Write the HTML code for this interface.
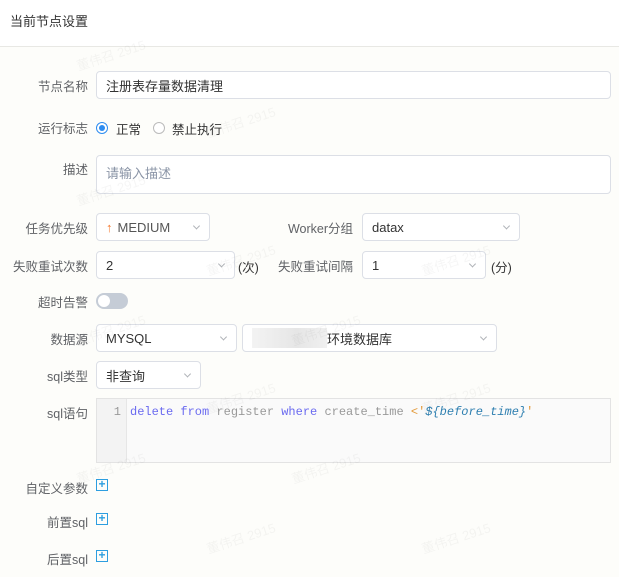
<!DOCTYPE html>
<html><head><meta charset="utf-8"><style>
*{box-sizing:border-box;margin:0;padding:0}
body{width:619px;height:577px;overflow:hidden;background:#fdfdfa;font-family:"Liberation Sans","Noto Sans CJK SC",sans-serif;font-size:13px;color:#333;position:relative}
.hd{position:absolute;left:0;top:0;width:619px;height:47px;background:#fff;border-bottom:1px solid #e8e8e4}
.t{position:absolute;left:10px;top:11px;font-size:13px;color:#333}
.lb{position:absolute;color:#606266;font-size:12.5px;text-align:right;white-space:nowrap}
.box{position:absolute;background:#fff;border:1px solid #dcdfe6;border-radius:4px;font-size:13px;color:#333;padding-left:9px;display:flex;align-items:center}
.ar{position:absolute;right:10px;top:50%;width:5px;height:5px;border-right:1px solid #b0b3b8;border-bottom:1px solid #b0b3b8;transform:translateY(-70%) rotate(45deg)}
.plus{position:absolute;left:96px;width:12px;height:12px;border:1px solid #2d9ee0;color:#2d9ee0;font-size:12px;line-height:9px;text-align:center;font-weight:bold}
.wm{position:absolute;color:rgba(0,0,0,.04);font-size:13px;transform:rotate(-18deg)}
</style></head><body>
<div class="hd"><div class="t">当前节点设置</div></div>

<div class="lb" style="left:20px;width:68px;top:76px">节点名称</div>
<div class="box" style="left:96px;top:71px;width:515px;height:28px">注册表存量数据清理</div>

<div class="lb" style="left:20px;width:68px;top:118px">运行标志</div>
<div style="position:absolute;left:96px;top:122px;width:12px;height:12px;border-radius:50%;border:1px solid #2d8cf0;background:#fff"><div style="position:absolute;left:2px;top:2px;width:6px;height:6px;border-radius:50%;background:#2d8cf0"></div></div>
<div style="position:absolute;left:116px;top:119px;font-size:12.5px">正常</div>
<div style="position:absolute;left:153px;top:122px;width:12px;height:12px;border-radius:50%;border:1px solid #bbb;background:#fff"></div>
<div style="position:absolute;left:172px;top:119px;font-size:12.5px">禁止执行</div>

<div class="lb" style="left:20px;width:68px;top:159px">描述</div>
<div class="box" style="left:96px;top:155px;width:515px;height:39px;align-items:flex-start;padding-top:7px;color:#8a94a6">请输入描述</div>

<div class="lb" style="left:10px;width:78px;top:218px">任务优先级</div>
<div class="box" style="left:96px;top:213px;width:114px;height:28px;color:#555"><span style="color:#f5782d;margin-right:5px">↑</span>MEDIUM<i class="ar"></i></div>
<div class="lb" style="left:270px;width:83px;top:218px">Worker分组</div>
<div class="box" style="left:362px;top:213px;width:158px;height:28px">datax<i class="ar"></i></div>

<div class="lb" style="left:4px;width:84px;top:256px">失败重试次数</div>
<div class="box" style="left:96px;top:251px;width:139px;height:28px">2<i class="ar"></i></div>
<div class="lb" style="left:238px;top:257px;color:#333">(次)</div>
<div class="lb" style="left:270px;width:83px;top:256px">失败重试间隔</div>
<div class="box" style="left:362px;top:251px;width:124px;height:28px">1<i class="ar"></i></div>
<div class="lb" style="left:491px;top:257px;color:#333">(分)</div>

<div class="lb" style="left:20px;width:68px;top:292px">超时告警</div>
<div style="position:absolute;left:96px;top:293px;width:32px;height:16px;border-radius:8px;background:#c5ccd6"><div style="position:absolute;left:2px;top:2px;width:12px;height:12px;border-radius:50%;background:#fff"></div></div>

<div class="lb" style="left:20px;width:68px;top:329px">数据源</div>
<div class="box" style="left:96px;top:324px;width:141px;height:28px">MYSQL<i class="ar"></i></div>
<div class="box" style="left:242px;top:324px;width:255px;height:28px"><span style="display:inline-block;width:75px;height:20px;background:linear-gradient(90deg,#f3f3f3,#e6e6e6 60%,#f0f0f0)"></span>环境数据库<i class="ar"></i></div>

<div class="lb" style="left:20px;width:68px;top:366px">sql类型</div>
<div class="box" style="left:96px;top:361px;width:105px;height:28px">非查询<i class="ar"></i></div>

<div class="lb" style="left:20px;width:68px;top:403px">sql语句</div>
<div style="position:absolute;left:96px;top:398px;width:515px;height:65px;border:1px solid #e3e3e3;background:#fafafa">
<div style="position:absolute;left:0;top:0;width:30px;height:63px;background:#f3f3f3;border-right:1px solid #e6e6e6;font-family:'Liberation Mono',monospace;font-size:12px;color:#999;text-align:right;padding:6px 5px 0 0">1</div>
<div style="position:absolute;left:33px;top:6px;font-family:'Liberation Mono',monospace;font-size:12px;white-space:pre;color:#999"><span style="color:#6a6af0">delete from</span> register <span style="color:#6a6af0">where</span> create_time <span style="color:#e39a3a">&lt;</span><span style="color:#e39a3a">'</span><i style="color:#2e7fb0">${before_time}</i><span style="color:#e39a3a">'</span></div>
</div>

<div class="lb" style="left:10px;width:78px;top:478px">自定义参数</div>
<div class="plus" style="top:479px">+</div>
<div class="lb" style="left:20px;width:68px;top:512px">前置sql</div>
<div class="plus" style="top:513px">+</div>
<div class="lb" style="left:20px;width:68px;top:549px">后置sql</div>
<div class="plus" style="top:550px">+</div>

<div class="wm" style="left:75px;top:45px">董伟召 2915</div>
<div class="wm" style="left:205px;top:112px">董伟召 2915</div>
<div class="wm" style="left:75px;top:180px">董伟召 2915</div>
<div class="wm" style="left:205px;top:250px">董伟召 2915</div>
<div class="wm" style="left:420px;top:250px">董伟召 2915</div>
<div class="wm" style="left:75px;top:320px">董伟召 2915</div>
<div class="wm" style="left:290px;top:320px">董伟召 2915</div>
<div class="wm" style="left:205px;top:388px">董伟召 2915</div>
<div class="wm" style="left:420px;top:388px">董伟召 2915</div>
<div class="wm" style="left:75px;top:458px">董伟召 2915</div>
<div class="wm" style="left:290px;top:458px">董伟召 2915</div>
<div class="wm" style="left:205px;top:528px">董伟召 2915</div>
<div class="wm" style="left:420px;top:528px">董伟召 2915</div>
</body></html>
